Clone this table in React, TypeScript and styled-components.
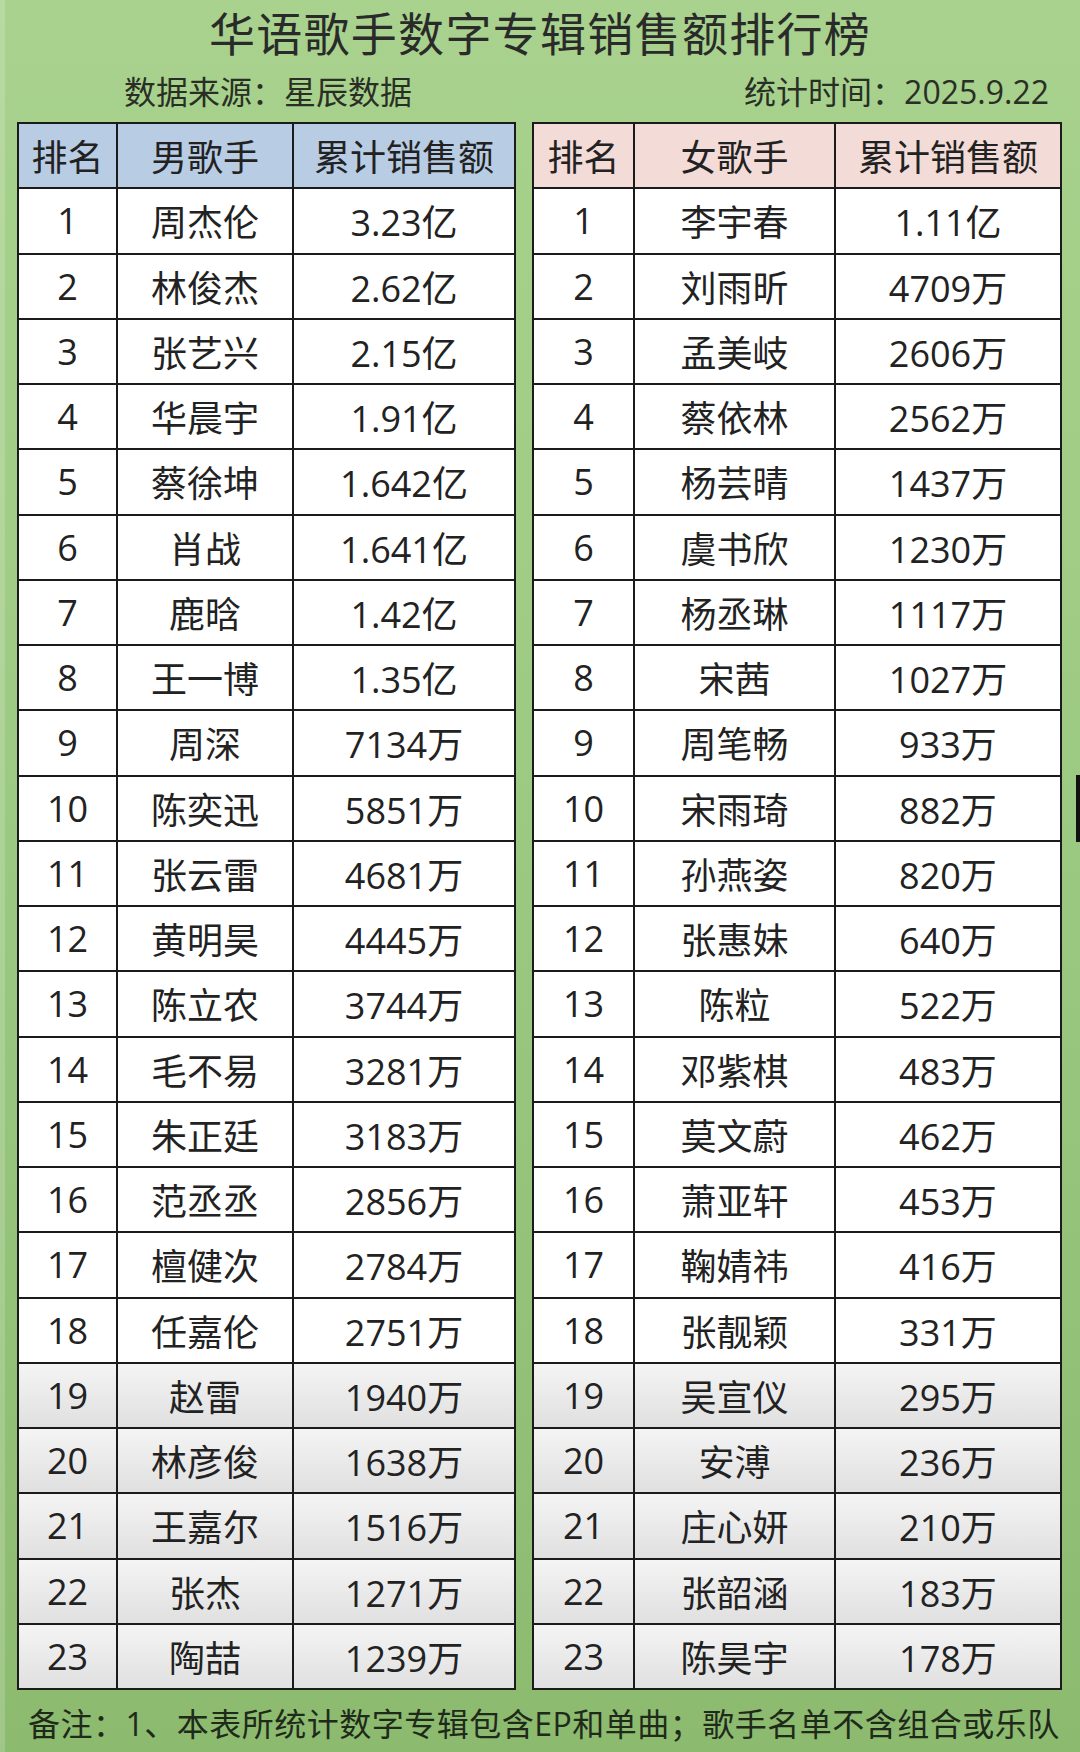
import React from "react";
import styled, { createGlobalStyle } from "styled-components";

const Global = createGlobalStyle`
  html, body { margin: 0; padding: 0; }
  body { width: 1080px; height: 1752px; overflow: hidden; }
`;

const FONT = `"Open Sans", "Noto Sans CJK SC", "Noto Sans", sans-serif`;

const Page = styled.div`
  position: relative;
  width: 1080px;
  height: 1752px;
  box-sizing: border-box;
  background: linear-gradient(180deg, #a8d28d 0%, #9dca83 45%, #8cba6f 100%);
  box-shadow: inset 5px 0 0 rgba(255, 255, 255, 0.18);
  font-family: ${FONT};
  color: #222;
  display: flex;
  flex-direction: column;
`;

const Title = styled.h1`
  margin: 0;
  padding-top: 5px;
  height: 56px;
  line-height: 56px;
  text-align: center;
  font-size: 46px;
  font-weight: 400;
  letter-spacing: 1.3px;
  color: #2a2a2a;
`;

const MetaRow = styled.div`
  margin-top: 11px;
  height: 40px;
  line-height: 40px;
  display: flex;
  justify-content: space-between;
  padding: 0 31px 0 124px;
  font-size: 32px;
  color: #2a2f26;
`;

const Tables = styled.div`
  margin-top: 10px;
  padding-left: 17px;
  display: grid;
  grid-template-columns: 499px 530px;
  column-gap: 16px;
`;

const Grid = styled.div<{ $cols: string }>`
  display: grid;
  grid-template-columns: ${(p) => p.$cols};
  grid-template-rows: repeat(24, 1fr);
  gap: 2px;
  padding: 2px;
  height: 1568px;
  box-sizing: border-box;
  background: #1b1b1b;
`;

const HeadCell = styled.div<{ $bg: string }>`
  background: ${(p) => p.$bg};
  display: flex;
  align-items: center;
  justify-content: center;
  font-size: 36px;
  color: #222;
`;

const Cell = styled.div<{ $shade: boolean }>`
  background: ${(p) =>
    p.$shade ? "linear-gradient(180deg, #f4f4f4 0%, #e0e0e0 100%)" : "#ffffff"};
  display: flex;
  align-items: center;
  justify-content: center;
  font-size: 36px;
  color: #222;
`;

const Footer = styled.div`
  margin-top: 14px;
  height: 40px;
  line-height: 40px;
  padding-left: 28px;
  font-size: 32px;
  letter-spacing: 0.5px;
  color: #1f2a1a;
  white-space: nowrap;
`;

const EdgeMark = styled.div`
  position: absolute;
  right: 0;
  top: 775px;
  width: 4px;
  height: 67px;
  background: #111;
`;

type Row = [string, string];

const male: Row[] = [
  ["周杰伦", "3.23亿"],
  ["林俊杰", "2.62亿"],
  ["张艺兴", "2.15亿"],
  ["华晨宇", "1.91亿"],
  ["蔡徐坤", "1.642亿"],
  ["肖战", "1.641亿"],
  ["鹿晗", "1.42亿"],
  ["王一博", "1.35亿"],
  ["周深", "7134万"],
  ["陈奕迅", "5851万"],
  ["张云雷", "4681万"],
  ["黄明昊", "4445万"],
  ["陈立农", "3744万"],
  ["毛不易", "3281万"],
  ["朱正廷", "3183万"],
  ["范丞丞", "2856万"],
  ["檀健次", "2784万"],
  ["任嘉伦", "2751万"],
  ["赵雷", "1940万"],
  ["林彦俊", "1638万"],
  ["王嘉尔", "1516万"],
  ["张杰", "1271万"],
  ["陶喆", "1239万"],
];

const female: Row[] = [
  ["李宇春", "1.11亿"],
  ["刘雨昕", "4709万"],
  ["孟美岐", "2606万"],
  ["蔡依林", "2562万"],
  ["杨芸晴", "1437万"],
  ["虞书欣", "1230万"],
  ["杨丞琳", "1117万"],
  ["宋茜", "1027万"],
  ["周笔畅", "933万"],
  ["宋雨琦", "882万"],
  ["孙燕姿", "820万"],
  ["张惠妹", "640万"],
  ["陈粒", "522万"],
  ["邓紫棋", "483万"],
  ["莫文蔚", "462万"],
  ["萧亚轩", "453万"],
  ["鞠婧祎", "416万"],
  ["张靓颖", "331万"],
  ["吴宣仪", "295万"],
  ["安溥", "236万"],
  ["庄心妍", "210万"],
  ["张韶涵", "183万"],
  ["陈昊宇", "178万"],
];

function RankTable({
  cols,
  headBg,
  label,
  rows,
}: {
  cols: string;
  headBg: string;
  label: string;
  rows: Row[];
}) {
  return (
    <Grid $cols={cols}>
      <HeadCell $bg={headBg}>排名</HeadCell>
      <HeadCell $bg={headBg}>{label}</HeadCell>
      <HeadCell $bg={headBg}>累计销售额</HeadCell>
      {rows.map(([name, amount], i) => {
        const shade = i >= 18;
        return (
          <React.Fragment key={i}>
            <Cell $shade={shade}>{i + 1}</Cell>
            <Cell $shade={shade}>{name}</Cell>
            <Cell $shade={shade}>{amount}</Cell>
          </React.Fragment>
        );
      })}
    </Grid>
  );
}

export default function App() {
  return (
    <Page>
      <Global />
      <Title>华语歌手数字专辑销售额排行榜</Title>
      <MetaRow>
        <span>数据来源：星辰数据</span>
        <span>统计时间：2025.9.22</span>
      </MetaRow>
      <Tables>
        <RankTable cols="97px 174px 1fr" headBg="#b8cce4" label="男歌手" rows={male} />
        <RankTable cols="99px 199px 1fr" headBg="#f3dcd8" label="女歌手" rows={female} />
      </Tables>
      <Footer>备注：1、本表所统计数字专辑包含EP和单曲；歌手名单不含组合或乐队</Footer>
      <EdgeMark />
    </Page>
  );
}
